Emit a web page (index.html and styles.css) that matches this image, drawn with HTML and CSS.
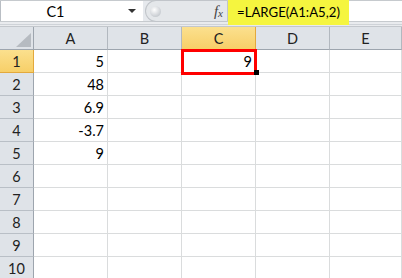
FILE: index.html
```html
<!DOCTYPE html>
<html lang="en">
<head>
  <meta charset="UTF-8">
  <title>LARGE function</title>
  <link rel="stylesheet" href="styles.css">
</head>
<body>
  <div class="bar">
    <div class="namebox">
      <span class="name">C1</span>
      <span class="arrow"></span>
    </div>
    <div class="grip">
      <span class="knob"></span>
      <span class="fx"><i>f</i><sub>x</sub></span>
    </div>
    <div class="formula"><span class="hl">=LARGE(A1:A5,2)</span></div>
  </div>
  <div class="strip"></div>

  <div class="sheet">
    <div class="hd corner"><span class="tri"></span></div>
    <div class="hd">A</div>
    <div class="hd">B</div>
    <div class="hd sel">C</div>
    <div class="hd">D</div>
    <div class="hd">E</div>

    <div class="rh sel">1</div><div class="c">5</div><div class="c"></div><div class="c active">9</div><div class="c"></div><div class="c"></div>
    <div class="rh">2</div><div class="c">48</div><div class="c"></div><div class="c"></div><div class="c"></div><div class="c"></div>
    <div class="rh">3</div><div class="c">6.9</div><div class="c"></div><div class="c"></div><div class="c"></div><div class="c"></div>
    <div class="rh">4</div><div class="c">-3.7</div><div class="c"></div><div class="c"></div><div class="c"></div><div class="c"></div>
    <div class="rh">5</div><div class="c">9</div><div class="c"></div><div class="c"></div><div class="c"></div><div class="c"></div>
    <div class="rh">6</div><div class="c"></div><div class="c"></div><div class="c"></div><div class="c"></div><div class="c"></div>
    <div class="rh">7</div><div class="c"></div><div class="c"></div><div class="c"></div><div class="c"></div><div class="c"></div>
    <div class="rh">8</div><div class="c"></div><div class="c"></div><div class="c"></div><div class="c"></div><div class="c"></div>
    <div class="rh">9</div><div class="c"></div><div class="c"></div><div class="c"></div><div class="c"></div><div class="c"></div>
    <div class="rh">10</div><div class="c"></div><div class="c"></div><div class="c"></div><div class="c"></div><div class="c"></div>
  </div>
</body>
</html>
```

FILE: styles.css
```css
* {box-sizing:border-box;}
body {margin:0; width:402px; height:278px; overflow:hidden; background:#fff; font-family:Lato, "Liberation Sans", sans-serif; font-size:14.5px; color:#000;}

/* name box + formula bar */
.bar {display:flex; height:22px; border-top:1px solid #c6cace; border-bottom:1px solid #c6cace; background:#e6e9ed;}
.namebox {width:143px; display:flex; align-items:center; background:#fff; border-left:1px solid #b9bec4;}
.name {flex:1; text-align:center; padding-right:18px;}
.arrow {width:0; height:0; border-left:4px solid transparent; border-right:4px solid transparent; border-top:4px solid #333; margin-right:7px;}
.grip {width:82px; display:flex; align-items:center; background:#e4e7ea; border:1px solid #c1c5ca; border-right:none; border-radius:11px 0 0 11px; margin:-1px 0 -1px 2px;}
.knob {width:11px; height:11px; border-radius:50%; margin-left:4px; background:radial-gradient(circle at 40% 35%, #fff, #c9cdd2 70%);}
.fx {margin-left:auto; margin-right:4px; font-family:"Liberation Serif", serif; font-size:15px; color:#444;}
.fx sub {font-size:11px; font-style:italic; vertical-align:-1px;}
.formula {flex:1; background:#fff; border-left:1px solid #c1c5ca;}
.hl {display:inline-block; height:25px; margin-top:-1px; padding:4px 9px 0 9px; background:#f5f53f; font-size:13.2px;}
.strip {height:5px; background:linear-gradient(#e9ebee 0 2px, #cfd3d8 2px 3px, #e9ebee 3px); border-bottom:1px solid #c3c7cc;}

/* sheet */
.sheet {display:grid; grid-template-columns:34px 74px 74px 74px 74px 1fr; grid-auto-rows:23px;}
.hd {background:#dfe3e8; border-right:1px solid #b2b8bf; border-bottom:1px solid #9da5ae; display:flex; align-items:center; justify-content:center; color:#222; padding-top:1px;}
.corner {position:relative; border-right:1px solid #9da5ae;}
.tri {position:absolute; right:2px; bottom:2px; width:0; height:0; border-left:15px solid transparent; border-bottom:14px solid #b6bbc1;}
.rh {background:#dfe3e8; border-right:1px solid #9da5ae; border-bottom:1px solid #b9bfc6; display:flex; align-items:center; justify-content:center; color:#222;}
.hd.sel, .rh.sel {background:linear-gradient(#fbe08e, #f7cf68); border-color:#e3a93c; color:#222;}
.c {border-right:1px solid #dadcdd; border-bottom:1px solid #dadcdd; text-align:right; padding:3px 3px 0 0;}
.c.active {position:relative;}
.c.active::after {content:""; position:absolute; left:-1px; top:-1px; right:-2px; bottom:-3px; border:3px solid #ff0000;}
.c.active::before {content:""; position:absolute; right:-4px; bottom:-3px; width:5px; height:5px; background:#000; z-index:1;}
```
